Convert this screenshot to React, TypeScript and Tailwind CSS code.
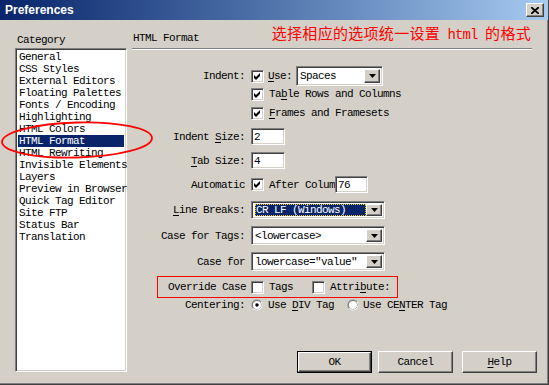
import React from 'react'

const mono = "font-['Liberation_Mono',monospace] text-[11px] tracking-[-0.6px] leading-[12px] text-black"
const sunken =
  'border border-t-[#808080] border-l-[#808080] border-b-white border-r-white shadow-[inset_1px_1px_0_#404040,inset_-1px_-1px_0_#d4d0c8]'
const raised =
  'border border-t-white border-l-white border-b-[#404040] border-r-[#404040] shadow-[inset_-1px_-1px_0_#808080,inset_1px_1px_0_#d4d0c8]'

const categories = [
  'General',
  'CSS Styles',
  'External Editors',
  'Floating Palettes',
  'Fonts / Encoding',
  'Highlighting',
  'HTML Colors',
  'HTML Format',
  'HTML Rewriting',
  'Invisible Elements',
  'Layers',
  'Preview in Browser',
  'Quick Tag Editor',
  'Site FTP',
  'Status Bar',
  'Translation',
]

const U = ({ children }: { children: React.ReactNode }) => (
  <span className="underline underline-offset-2">{children}</span>
)

const Check = ({ on }: { on?: boolean }) => (
  <div className={`w-[13px] h-[13px] shrink-0 bg-white ${sunken}`}>
    {on && (
      <svg width="11" height="11" viewBox="0 0 11 11" className="block">
        <path d="M2 4 L4 6 L8 2 L8 5 L4 9 L2 7 Z" fill="#000" />
      </svg>
    )}
  </div>
)

const Radio = ({ on }: { on?: boolean }) => (
  <svg width="12" height="12" viewBox="0 0 12 12" className="shrink-0">
    <circle cx="6" cy="6" r="5.5" fill="#808080" />
    <path d="M1.8 9.8 A5.5 5.5 0 0 0 10.2 2.2 L9.5 3 A4.5 4.5 0 0 1 2.5 9 Z" fill="#fff" />
    <circle cx="6" cy="6" r="4" fill="#fff" />
    {on && <circle cx="6" cy="6" r="1.7" fill="#000" />}
  </svg>
)

const Arrow = () => (
  <div className={`w-[16px] h-full shrink-0 bg-[#d4d0c8] flex items-center justify-center ${raised}`}>
    <svg width="7" height="4" viewBox="0 0 7 4">
      <path d="M0 0 H7 L3.5 4 Z" fill="#000" />
    </svg>
  </div>
)

const Select = ({ value, w, h, active }: { value: string; w: string; h: string; active?: boolean }) => (
  <div className={`${w} ${h} bg-white flex items-stretch p-[2px] ${sunken}`}>
    <div className="flex-1 flex items-center pl-[1px]">
      {active ? (
        <div className="h-full flex-1 bg-[#0a246a] text-white flex items-center pl-[1px] outline outline-1 outline-dotted outline-[#f0d000] -outline-offset-1">
          {value}
        </div>
      ) : (
        <span>{value}</span>
      )}
    </div>
    <Arrow />
  </div>
)

const Field = ({ value, w }: { value: string; w: string }) => (
  <div className={`${w} h-[17px] bg-white flex items-center pl-[2px] ${sunken}`}>{value}</div>
)

const Row = ({ label, className, children }: { label?: React.ReactNode; className: string; children: React.ReactNode }) => (
  <div className={`flex items-center ${className}`}>
    <div className="w-[114px] text-right shrink-0 pr-[1px]">{label}</div>
    <div className="ml-[5px] flex items-center h-full">{children}</div>
  </div>
)

const Button = ({ children, def }: { children: React.ReactNode; def?: boolean }) => (
  <div className={`w-[75px] h-[22px] ${def ? 'border border-black' : ''}`}>
    <div className={`w-full h-full bg-[#d4d0c8] flex items-center justify-center ${raised}`}>{children}</div>
  </div>
)

export default function App() {
  return (
    <div className={`w-[549px] h-[385px] bg-[#d4d0c8] flex flex-col border-r border-b border-r-[#404040] border-b-[#404040] shadow-[inset_-1px_-1px_0_#808080] ${mono}`}>
      <div className="h-[20px] shrink-0 bg-linear-to-r from-[#0a246a] to-[#a6caf0] flex items-center pl-[5px] pr-[4px]">
        <span className="font-['Liberation_Sans',sans-serif] font-bold text-[12px] tracking-normal text-white">Preferences</span>
        <div className={`ml-auto w-[18px] h-[14px] bg-[#d4d0c8] flex items-center justify-center ${raised}`}>
          <svg width="8" height="7" viewBox="0 0 8 7">
            <path d="M0 0 L8 7 M8 0 L0 7" stroke="#000" strokeWidth="1.8" />
          </svg>
        </div>
      </div>

      <div className="flex-1 flex relative">
        <div className="ml-[15px] w-[112px] pt-[14px] flex flex-col">
          <div className="pl-[2px]">Category</div>
          <div className={`mt-[2px] h-[324px] bg-white p-[2px] ${sunken}`}>
            {categories.map((c) => (
              <div
                key={c}
                className={`h-[12px] pl-[1px] whitespace-nowrap ${c === 'HTML Format' ? 'bg-[#0a246a] text-white' : ''}`}
              >
                {c}
              </div>
            ))}
          </div>
        </div>

        <div className="ml-[5px] flex-1 flex flex-col pr-[11px] pb-[11px]">
          <div className="h-[22px] mt-[4px] flex items-start mr-[5px]">
            <span className="mt-[8px] pl-[1px]">HTML Format</span>
            <span className="ml-auto pr-[1px] text-[#ff0000] text-[15px] leading-[18px] tracking-[0.3px] font-['Noto_Sans_CJK_SC',sans-serif] whitespace-nowrap">
              选择相应的选项统一设置
              <span className="font-['Liberation_Mono',monospace] text-[14px] tracking-[-0.9px]"> html </span>
              的格式
            </span>
          </div>
          <div className="mt-[2px] mr-[5px] h-[2px] border-t border-t-[#808080] border-b border-b-white" />

          <Row label="Indent:" className="mt-[16px] h-[20px]">
            <Check on />
            <span className="ml-[4px]">
              <U>U</U>se:
            </span>
            <div className="ml-[4px]">
              <Select value="Spaces" w="w-[87px]" h="h-[20px]" />
            </div>
          </Row>
          <Row className="h-[16px]">
            <Check on />
            <span className="ml-[5px] whitespace-nowrap">
              Ta<U>b</U>le Rows and Columns
            </span>
          </Row>
          <Row className="mt-[3px] h-[16px]">
            <Check on />
            <span className="ml-[5px] whitespace-nowrap">
              <U>F</U>rames and Framesets
            </span>
          </Row>
          <Row
            label={
              <>
                Indent <U>S</U>ize:
              </>
            }
            className="mt-[7px] h-[17px]"
          >
            <Field value="2" w="w-[34px]" />
          </Row>
          <Row
            label={
              <>
                <U>T</U>ab Size:
              </>
            }
            className="mt-[7px] h-[17px]"
          >
            <Field value="4" w="w-[34px]" />
          </Row>
          <Row label="Automatic" className="mt-[7px] h-[17px]">
            <Check on />
            <span className="ml-[5px] whitespace-nowrap">After Colum</span>
            <Field value="76" w="w-[33px]" />
          </Row>
          <Row
            label={
              <>
                <U>L</U>ine Breaks:
              </>
            }
            className="mt-[8px] h-[18px]"
          >
            <Select value="CR LF (Windows)" w="w-[134px]" h="h-[18px]" active />
          </Row>
          <Row label="Case for Tags:" className="mt-[7px] h-[19px]">
            <Select value="<lowercase>" w="w-[134px]" h="h-[19px]" />
          </Row>
          <Row label="Case for" className="mt-[7px] h-[19px]">
            <Select value={'lowercase="value"'} w="w-[134px]" h="h-[19px]" />
          </Row>

          <div className="mt-[5px] ml-[25px] w-[241px] h-[22px] border border-[#ff0000] flex items-center">
            <div className="w-[88px] text-right shrink-0">Override Case</div>
            <div className="ml-[5px] flex items-center">
              <Check />
              <span className="ml-[5px]">Tags</span>
              <div className="ml-[19px]">
                <Check />
              </div>
              <span className="ml-[5px]">
                Attri<U>b</U>ute:
              </span>
            </div>
          </div>

          <Row label="Centering:" className="h-[14px]">
            <Radio on />
            <span className="ml-[5px] whitespace-nowrap">
              Use <U>D</U>IV Tag
            </span>
            <div className="ml-[13px]">
              <Radio />
            </div>
            <span className="ml-[4px] whitespace-nowrap">
              Use CE<U>N</U>TER Tag
            </span>
          </Row>

          <div className="mt-auto flex justify-end items-end">
            <Button def>OK</Button>
            <div className="ml-[6px]">
              <Button>Cancel</Button>
            </div>
            <div className="ml-[9px]">
              <Button>
                <span>
                  <U>H</U>elp
                </span>
              </Button>
            </div>
          </div>
        </div>

        <svg width="156" height="42" viewBox="0 0 156 42" className="absolute left-0 top-[100px] pointer-events-none">
          <ellipse cx="77" cy="20" rx="75" ry="17.5" fill="none" stroke="#ff0000" strokeWidth="1.8" transform="rotate(-1.5 77 20)" />
        </svg>
      </div>
    </div>
  )
}
